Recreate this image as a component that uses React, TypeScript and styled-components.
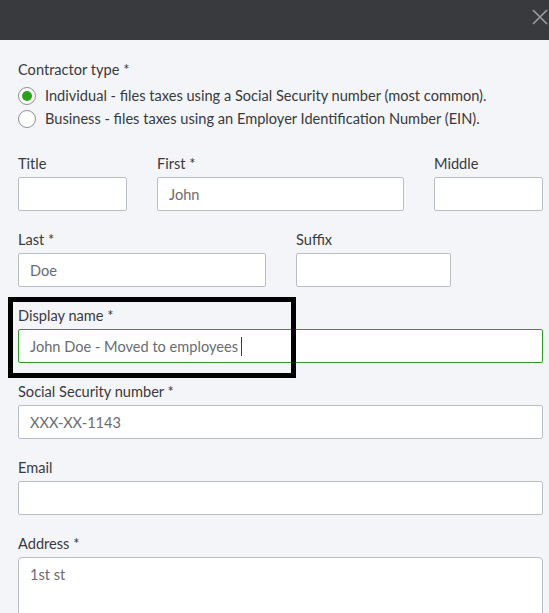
import React from "react";
import styled, { createGlobalStyle } from "styled-components";

const GlobalStyle = createGlobalStyle`
    html, body {
        margin: 0;
        padding: 0;
        background: #f4f5f8;
    }
    body {
        font-family: Lato, "Open Sans", sans-serif;
        color: #393a3d;
    }
`;

const Modal = styled.div`
    width: 549px;
    height: 613px;
    overflow: hidden;
    background: #f4f5f8;
`;

const TopBar = styled.header`
    height: 40px;
    background: #393a3d;
    display: flex;
    justify-content: flex-end;
    align-items: flex-start;
    padding: 9px 1px 0 0;
    box-sizing: border-box;
`;

const CloseBtn = styled.button`
    width: 16px;
    height: 16px;
    padding: 0;
    border: none;
    background: transparent;
    cursor: pointer;
    svg {
        display: block;
    }
`;

const Body = styled.div`
    padding: 21px 6px 0 18px;
    display: flex;
    flex-direction: column;
    gap: 20px;
`;

const Label = styled.div`
    font-size: 14.6px;
    line-height: 18px;
    margin-bottom: 4px;
    color: #393a3d;
    white-space: nowrap;
`;

const RadioGroup = styled.div`
    display: flex;
    flex-direction: column;
    margin-top: 1px;
    margin-bottom: 5px;
`;

const RadioRow = styled.label`
    display: flex;
    align-items: center;
    gap: 9px;
    height: 23px;
    font-size: 14.6px;
    color: #393a3d;
    white-space: nowrap;
`;

const RadioCircle = styled.span<{ $checked?: boolean }>`
    width: 18px;
    height: 18px;
    box-sizing: border-box;
    border-radius: 50%;
    border: 1px solid #8d9096;
    background: #fff;
    display: flex;
    align-items: center;
    justify-content: center;
    flex-shrink: 0;

    &::after {
        content: "";
        width: 10px;
        height: 10px;
        border-radius: 50%;
        background: ${({ $checked }) => ($checked ? "#2ca01c" : "transparent")};
    }
`;

const Row = styled.div<{ $cols: string }>`
    display: grid;
    grid-template-columns: ${({ $cols }) => $cols};
    column-gap: 30px;
`;

const Field = styled.div`
    position: relative;
    display: flex;
    flex-direction: column;
`;

const Box = styled.div<{ $focused?: boolean; $tall?: boolean }>`
    height: ${({ $tall }) => ($tall ? "60px" : "34px")};
    box-sizing: border-box;
    background: #fff;
    border: 1px solid ${({ $focused }) => ($focused ? "#2ca01c" : "#babec5")};
    border-radius: ${({ $tall }) => ($tall ? "4px" : "2px")};
    padding: ${({ $tall }) => ($tall ? "8px 11px" : "0 11px")};
    display: flex;
    align-items: ${({ $tall }) => ($tall ? "flex-start" : "center")};
    font-size: 14.6px;
    color: #6b6c72;
    white-space: nowrap;
`;

const Caret = styled.span`
    display: inline-block;
    width: 1px;
    height: 19px;
    background: #393a3d;
    margin-left: 3px;
`;

const Highlight = styled.div`
    position: absolute;
    left: -10px;
    top: -10px;
    width: 288px;
    height: 81px;
    box-sizing: border-box;
    border: 5px solid #000;
    pointer-events: none;
`;

const App: React.FC = () => {
    return (
        <>
            <GlobalStyle />
            <Modal>
                <TopBar>
                    <CloseBtn aria-label="Close">
                        <svg width="16" height="16" viewBox="0 0 16 16">
                            <path d="M1 1 L15 15 M15 1 L1 15" stroke="#9c9da1" strokeWidth="1.6" fill="none" />
                        </svg>
                    </CloseBtn>
                </TopBar>
                <Body>
                    <Field>
                        <Label>Contractor type *</Label>
                        <RadioGroup>
                            <RadioRow>
                                <RadioCircle $checked />
                                Individual - files taxes using a Social Security number (most common).
                            </RadioRow>
                            <RadioRow>
                                <RadioCircle />
                                Business - files taxes using an Employer Identification Number (EIN).
                            </RadioRow>
                        </RadioGroup>
                    </Field>

                    <Row $cols="109px 247px 109px">
                        <Field>
                            <Label>Title</Label>
                            <Box />
                        </Field>
                        <Field>
                            <Label>First *</Label>
                            <Box>John</Box>
                        </Field>
                        <Field>
                            <Label>Middle</Label>
                            <Box />
                        </Field>
                    </Row>

                    <Row $cols="248px 155px">
                        <Field>
                            <Label>Last *</Label>
                            <Box>Doe</Box>
                        </Field>
                        <Field>
                            <Label>Suffix</Label>
                            <Box />
                        </Field>
                    </Row>

                    <Field>
                        <Label>Display name *</Label>
                        <Box $focused>
                            John Doe - Moved to employees
                            <Caret />
                        </Box>
                        <Highlight />
                    </Field>

                    <Field>
                        <Label>Social Security number *</Label>
                        <Box>XXX-XX-1143</Box>
                    </Field>

                    <Field>
                        <Label>Email</Label>
                        <Box />
                    </Field>

                    <Field>
                        <Label>Address *</Label>
                        <Box $tall>1st st</Box>
                    </Field>
                </Body>
            </Modal>
        </>
    );
};

export default App;
